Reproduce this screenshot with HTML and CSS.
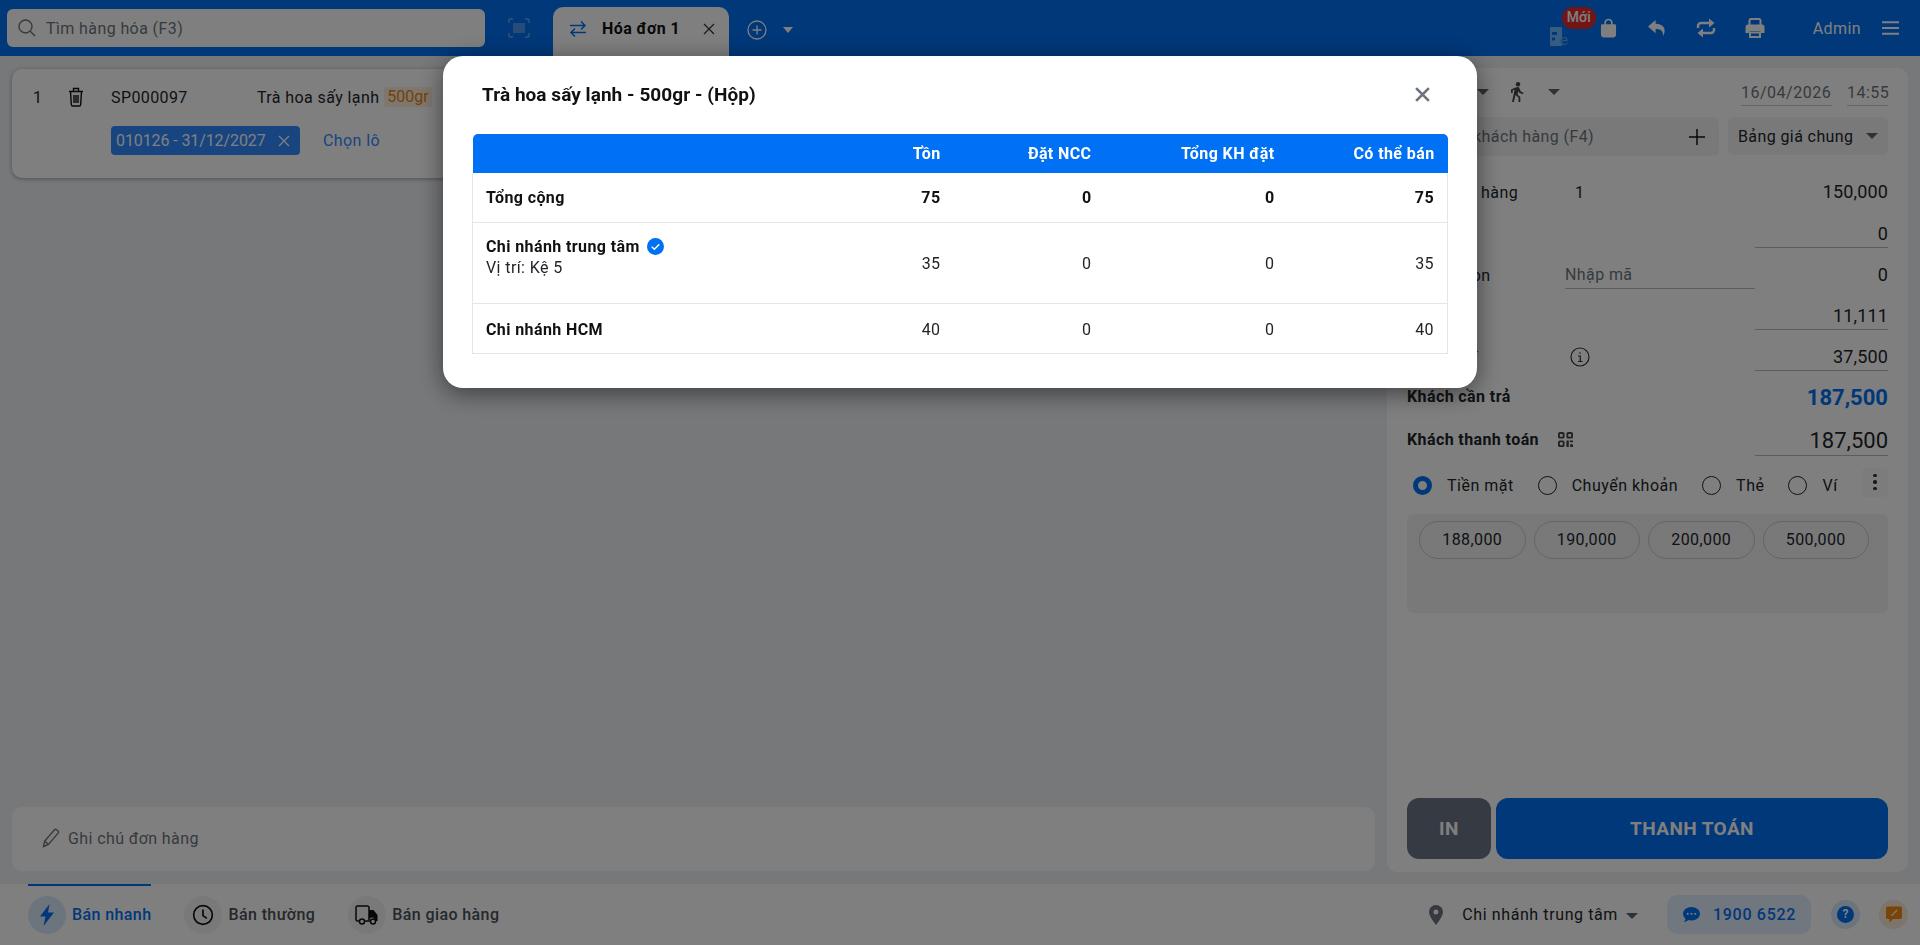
FILE: index.html
```html
<!DOCTYPE html>
<html>
<head>
    <title>Bán hàng</title>
    <link rel="stylesheet" href="styles.css">
</head>
<body>
    <div class="app">
        <header class="topbar">
            <div class="search">
                <svg class="search-icon" viewBox="0 0 20 20"><circle cx="8.5" cy="8.5" r="6.5"/><path d="M13.3 13.3 18 18"/></svg>
                <span>Tìm hàng hóa (F3)</span>
            </div>
            <svg class="barcode" viewBox="0 0 22 20"><path d="M1 5V2a1 1 0 0 1 1-1h3M17 1h3a1 1 0 0 1 1 1v3M21 15v3a1 1 0 0 1-1 1h-3M5 19H2a1 1 0 0 1-1-1v-3"/><path d="M6 5v10M8 5v10M10 5v10M12 5v10M14 5v10M16 5v10"/></svg>
            <div class="tab">
                <svg class="tab-swap" viewBox="0 0 18 18"><path d="M1 5.5h15M12 1.5l4 4-4 4M17 12.500H2M6 8.500l-4 4 4 4"/></svg>
                <span class="tab-name">Hóa đơn 1</span>
                <svg class="tab-close" viewBox="0 0 12 12"><path d="M1 1l10 10M11 1 1 11"/></svg>
            </div>
            <svg class="tab-add" viewBox="0 0 20 20"><circle cx="10" cy="10" r="9"/><path d="M10 5.5v9M5.5 10h9"/></svg>
            <span class="caret caret-light"></span>
            <div class="topbar-right">
                <div class="einvoice">
                    <svg viewBox="0 0 21 19"><path class="einvoice-doc" d="M0 1a1 1 0 0 1 1-1h10a1 1 0 0 1 1 1v17a1 1 0 0 1-1 1H1a1 1 0 0 1-1-1z"/><path class="einvoice-line" d="M2 5h5v3H2zM2 10.500h3v3H2z"/><text x="10" y="18" class="einvoice-e">e</text></svg>
                    <span class="badge-new">Mới</span>
                </div>
                <svg class="top-icon bag" viewBox="0 0 18 20"><path d="M1 7.5A1.500 1.500 0 0 1 2.500 6h13A1.500 1.500 0 0 1 17 7.500V17a3 3 0 0 1-3 3H4a3 3 0 0 1-3-3z" fill="#fff"/><path d="M5.500 7V4.500a3.500 3.500 0 0 1 7 0V7" fill="none" stroke="#fff" stroke-width="1.800"/></svg>
                <svg class="top-icon" viewBox="0 0 20 18"><path d="M8.600 1 1 7.600l7.600 6.600V10c5 0 7.400 1.500 7.600 7 3.200-5.600 1.600-12-7.600-12.200z" fill="#fff"/></svg>
                <svg class="top-icon" viewBox="0 0 20 20"><path d="M2 10V8a3 3 0 0 1 3-3h11M18 10v2a3 3 0 0 1-3 3H4" fill="none" stroke="#fff" stroke-width="2.400"/><path d="M13 .5 18.500 5 13 9.500zM7 10.500 1.500 15 7 19.500z" fill="#fff"/></svg>
                <svg class="top-icon" viewBox="0 0 20 20"><path d="M4.500 7V2.500A1.500 1.500 0 0 1 6 1h8a1.500 1.500 0 0 1 1.500 1.500V7" fill="none" stroke="#fff" stroke-width="2"/><path d="M3 6.500h14A2.500 2.500 0 0 1 19.500 9v6h-4v-2h-11v2h-4V9A2.500 2.500 0 0 1 3 6.500z" fill="#fff"/><path d="M5 14.500h10V19H5z" fill="none" stroke="#fff" stroke-width="2"/></svg>
                <span class="admin">Admin</span>
                <svg class="menu" viewBox="0 0 18 16"><path d="M0 2h18M0 8h18M0 14h18"/></svg>
            </div>
        </header>

        <main class="workspace">
            <section class="order">
                <div class="item-card">
                    <div class="item-row">
                        <span class="item-no">1</span>
                        <svg class="trash" viewBox="0 0 16 20"><path d="M1 4.500h14M5.500 4.500v-3h5v3M2.500 4.500l.8 13A1.500 1.500 0 0 0 4.800 19h6.400a1.500 1.500 0 0 0 1.500-1.500l.8-13M6 8v8M8 8v8M10 8v8"/></svg>
                        <span class="item-code">SP000097</span>
                        <span class="item-name">Trà hoa sấy lạnh</span>
                        <span class="item-unit">500gr</span>
                    </div>
                    <div class="lot-row">
                        <span class="lot-tag">010126 - 31/12/2027
                            <svg viewBox="0 0 12 12"><path d="M1 1l10 10M11 1 1 11"/></svg>
                        </span>
                        <span class="lot-pick">Chọn lô</span>
                    </div>
                </div>
                <div class="note">
                    <svg viewBox="0 0 18 20"><path d="M1.500 18.500l1.200-5.500L12.500 1.800a1.500 1.500 0 0 1 2.100-.1l1.400 1.300a1.500 1.500 0 0 1 .1 2.100L6.400 16.500zM2.700 13l3.700 3.500"/></svg>
                    <span>Ghi chú đơn hàng</span>
                </div>
            </section>

            <aside class="checkout">
                <div class="meta-row">
                    <span class="seller">Admin</span>
                    <span class="caret"></span>
                    <svg class="walk" viewBox="0 0 14 20"><circle cx="8" cy="2.300" r="2.200"/><path d="M5.500 5.500 8.800 5l2 4.500 2.700 1.200-.7 1.500-3.500-1.500-.8-1.700-1 3.500 2.800 2.500V20H8.500v-4.500L5.500 13 3.800 20H2l2-9.500.5-3-1.800.9V11H1V7.500z"/></svg>
                    <span class="caret"></span>
                    <span class="date">16/04/2026</span>
                    <span class="time">14:55</span>
                </div>
                <div class="customer-row">
                    <div class="customer">
                        <span>Tìm khách hàng (F4)</span>
                        <svg viewBox="0 0 16 16"><path d="M8 0v16M0 8h16"/></svg>
                    </div>
                    <div class="pricebook">
                        <span>Bảng giá chung</span>
                        <span class="caret"></span>
                    </div>
                </div>
                <div class="sum-row sum-first">
                    <span>Tổng tiền hàng</span>
                    <span class="sum-qty">1</span>
                    <span class="sum-value">150,000</span>
                </div>
                <div class="sum-row">
                    <span>Giảm giá</span>
                    <span></span>
                    <span class="sum-value line">0</span>
                </div>
                <div class="sum-row">
                    <span>Mã coupon</span>
                    <span class="coupon">Nhập mã</span>
                    <span class="sum-value">0</span>
                </div>
                <div class="sum-row">
                    <span>Thu khác</span>
                    <span></span>
                    <span class="sum-value line">11,111</span>
                </div>
                <div class="sum-row">
                    <span>Thuế VAT</span>
                    <svg class="info" viewBox="0 0 20 20"><circle cx="10" cy="10" r="9"/><path d="M8 9h2.300v5M8 14.500h4.500M10 5.300v1.500"/></svg>
                    <span class="sum-value line">37,500</span>
                </div>
                <div class="total-row">
                    <span class="total-label">Khách cần trả</span>
                    <span class="total-value">187,500</span>
                </div>
                <div class="paid-row">
                    <span class="paid-label">Khách thanh toán</span>
                    <svg class="qr" viewBox="0 0 16 16"><rect x="1" y="1" width="5" height="5" rx="1"/><rect x="10" y="1" width="5" height="5" rx="1"/><rect x="1" y="10" width="5" height="5" rx="1"/><path class="qr-fill" d="M9 9h2.500v7H9zM12.500 9H16v2h-3.500zM13 13h3v3h-3z"/></svg>
                    <span class="paid-value">187,500</span>
                </div>
                <div class="pay-methods">
                    <span class="radio radio-on"></span><span class="method">Tiền mặt</span>
                    <span class="radio"></span><span class="method">Chuyển khoản</span>
                    <span class="radio"></span><span class="method">Thẻ</span>
                    <span class="radio"></span><span class="method">Ví</span>
                    <span class="more"><i></i><i></i><i></i></span>
                </div>
                <div class="cash-box">
                    <span class="pill">188,000</span>
                    <span class="pill">190,000</span>
                    <span class="pill">200,000</span>
                    <span class="pill">500,000</span>
                </div>
                <div class="actions">
                    <button class="btn-print" type="button">IN</button>
                    <button class="btn-pay" type="button">THANH TOÁN</button>
                </div>
            </aside>
        </main>

        <footer class="bottombar">
            <div class="mode mode-active">
                <span class="mode-icon"><svg viewBox="0 0 16 22"><path class="bolt" d="M10.500 0 1 12.500h5.500L4.500 22 15 8.500H9z"/></svg></span>
                <span>Bán nhanh</span>
            </div>
            <div class="mode">
                <span class="mode-icon"><svg viewBox="0 0 20 20"><circle class="line-icon" cx="10" cy="10" r="8.500"/><path class="line-icon" d="M10 5v5.500l3.500 2.500"/></svg></span>
                <span>Bán thường</span>
            </div>
            <div class="mode">
                <span class="mode-icon"><svg viewBox="0 0 24 20"><path class="line-icon" d="M5 16H2.500A1.500 1.500 0 0 1 1 14.500v-12A1.500 1.500 0 0 1 2.500 1h10A1.500 1.500 0 0 1 14 2.500V15M9 16h6"/><path class="truck-fill" d="M14 5h4.500l4 5v6H20a3 3 0 0 0-6-1z"/><circle class="line-icon" cx="7" cy="16.500" r="2.500"/><circle class="line-icon" cx="18" cy="16.500" r="2.500"/></svg></span>
                <span>Bán giao hàng</span>
            </div>
            <div class="bottom-right">
                <svg class="pin" viewBox="0 0 14 20"><path fill-rule="evenodd" d="M7 0a7 7 0 0 1 7 7c0 4.500-7 13-7 13S0 11.500 0 7a7 7 0 0 1 7-7zm0 4.500a2.500 2.500 0 1 0 0 5 2.500 2.500 0 0 0 0-5z"/></svg>
                <span class="branch">Chi nhánh trung tâm</span>
                <span class="caret"></span>
                <div class="hotline">
                    <svg viewBox="0 0 18 16"><path fill-rule="evenodd" d="M9 0c5 0 9 3.200 9 7.200s-4 7.200-9 7.200c-1.200 0-2.300-.2-3.300-.5C4.500 15 2.500 16 .8 16c.9-1 1.700-2.300 1.800-3.500C1 11.200 0 9.300 0 7.200 0 3.200 4 0 9 0zM5 6a1.200 1.200 0 1 0 0 2.400A1.200 1.200 0 0 0 5 6zm4 0a1.200 1.200 0 1 0 0 2.400A1.200 1.200 0 0 0 9 6zm4 0a1.200 1.200 0 1 0 0 2.400A1.200 1.200 0 0 0 13 6z"/></svg>
                    <span>1900 6522</span>
                </div>
                <span class="help"><b>?</b></span>
                <span class="feedback">
                    <svg viewBox="0 0 18 18"><path fill-rule="evenodd" d="M2 0h14a2 2 0 0 1 2 2v10a2 2 0 0 1-2 2H8l-4 4v-4H2a2 2 0 0 1-2-2V2a2 2 0 0 1 2-2zm9.800 3.500L6 9.300 5.500 11l1.700-.5L13 4.700z"/></svg>
                </span>
            </div>
        </footer>
    </div>

    <div class="overlay">
        <div class="modal">
            <div class="modal-head">
                <h2>Trà hoa sấy lạnh - 500gr - (Hộp)</h2>
                <svg class="modal-close" viewBox="0 0 16 16"><path d="M2 2l12 12M14 2 2 14"/></svg>
            </div>
            <table class="stock">
                <thead>
                    <tr>
                        <th class="col-name"></th>
                        <th class="col-a">Tồn</th>
                        <th class="col-b">Đặt NCC</th>
                        <th class="col-c">Tổng KH đặt</th>
                        <th class="col-d">Có thể bán</th>
                    </tr>
                </thead>
                <tbody>
                    <tr class="row-total">
                        <td>Tổng cộng</td><td>75</td><td>0</td><td>0</td><td>75</td>
                    </tr>
                    <tr class="row-branch">
                        <td>
                            <div class="branch-name">Chi nhánh trung tâm
                                <svg viewBox="0 0 18 18"><circle cx="9" cy="9" r="9"/><path d="M5 9.200l2.800 2.800L13 6.500"/></svg>
                            </div>
                            <div class="branch-pos">Vị trí: Kệ 5</div>
                        </td>
                        <td>35</td><td>0</td><td>0</td><td>35</td>
                    </tr>
                    <tr class="row-plain">
                        <td><div class="branch-name">Chi nhánh HCM</div></td>
                        <td>40</td><td>0</td><td>0</td><td>40</td>
                    </tr>
                </tbody>
            </table>
        </div>
    </div>
</body>
</html>
```

FILE: styles.css
```css
* {
    box-sizing: border-box;
}
html, body {
    margin: 0;
    height: 100%;
    overflow: hidden;
}
body {
    font-family: Roboto, "Liberation Sans", sans-serif;
    font-size: 16px;
    letter-spacing: .4px;
    color: #212529;
    background: #ecf0f4;
}
svg {
    display: block;
    flex: none;
}
.app {
    height: 945px;
    display: flex;
    flex-direction: column;
}
.caret {
    display: block;
    flex: none;
    width: 0;
    height: 0;
    border-left: 6px solid transparent;
    border-right: 6px solid transparent;
    border-top: 6px solid #5b6470;
}
.caret-light {
    border-left-width: 5px;
    border-right-width: 5px;
    border-top-color: #fff;
    margin-left: 16px;
}

/* top bar */
.topbar {
    height: 56px;
    flex: none;
    background: #0070f4;
    display: flex;
    align-items: flex-end;
    padding-left: 7px;
}
.search {
    width: 478px;
    height: 38px;
    margin-bottom: 9px;
    background: #fff;
    border-radius: 6px;
    display: flex;
    align-items: center;
    gap: 9px;
    padding-left: 10px;
    color: #6c757d;
}
.search-icon {
    width: 20px;
    height: 20px;
    fill: none;
    stroke: #6c757d;
    stroke-width: 1.4;
}
.barcode {
    width: 22px;
    height: 20px;
    margin: 0 23px 18px 23px;
    fill: none;
    stroke: #6ea9f0;
    stroke-width: 1.4;
}
.tab {
    width: 176px;
    height: 49px;
    background: #fff;
    border-radius: 10px 10px 0 0;
    display: flex;
    align-items: center;
    padding: 0 14px 6px 16px;
}
.tab-swap {
    width: 18px;
    height: 18px;
    fill: none;
    stroke: #0070f4;
    stroke-width: 1.5;
}
.tab-name {
    margin-left: 15px;
    font-weight: 700;
    color: #111;
}
.tab-close {
    width: 12px;
    height: 12px;
    margin-left: auto;
    fill: none;
    stroke: #333;
    stroke-width: 1.2;
}
.tab-add {
    width: 20px;
    height: 20px;
    margin: 0 0 16px 18px;
    fill: none;
    stroke: #fff;
    stroke-width: 1.3;
}
.topbar > .caret-light {
    margin-bottom: 23px;
}
.topbar-right {
    margin-left: auto;
    align-self: stretch;
    display: flex;
    align-items: center;
    padding-right: 21px;
    color: #fff;
}
.einvoice {
    width: 44px;
    height: 40px;
    position: relative;
    margin-right: 6px;
    padding-top: 19px;
}
.einvoice svg {
    width: 21px;
    height: 19px;
    overflow: visible;
}
.einvoice-doc {
    fill: #70b8ff;
}
.einvoice-line {
    fill: #0070f4;
}
.einvoice-e {
    font-family: Roboto, sans-serif;
    font-size: 15px;
    letter-spacing: 0;
    fill: #70b8ff;
    stroke: #0070f4;
    stroke-width: .3;
}
.badge-new {
    position: absolute;
    left: 12px;
    top: -1px;
    width: 34px;
    height: 22px;
    border-radius: 11px;
    background: #e62a2a;
    color: #fff;
    font-size: 14px;
    letter-spacing: 0;
    font-weight: 500;
    text-align: center;
    line-height: 21px;
}
.top-icon {
    width: 20px;
    height: 20px;
    margin-right: 29px;
}
.bag {
    width: 17px;
    margin-right: 30px;
}
.admin {
    margin-left: 19px;
}
.menu {
    width: 17px;
    height: 16px;
    margin-left: 21px;
    stroke: #fff;
    stroke-width: 2.2;
}

/* main area */
.workspace {
    flex: 1;
    min-height: 0;
    display: flex;
    gap: 12px;
    padding: 12px;
}
.order {
    flex: 1;
    display: flex;
    flex-direction: column;
    justify-content: space-between;
    padding: 1px 0;
}
.item-card {
    height: 109px;
    background: #fff;
    border-radius: 10px;
    box-shadow: 0 1px 4px rgba(0, 0, 0, .35);
    padding: 0 21px;
}
.item-row {
    height: 56px;
    display: flex;
    align-items: center;
}
.item-no {
    width: 35px;
}
.trash {
    width: 16px;
    height: 20px;
    fill: none;
    stroke: #111;
    stroke-width: 1.4;
}
.item-code {
    margin-left: 27px;
    width: 146px;
}
.item-name {
    width: 127px;
    letter-spacing: .4px;
    white-space: nowrap;
}
.item-unit {
    width: 48px;
    height: 20px;
    line-height: 20px;
    text-align: center;
    border-radius: 3px;
    background: #ffefdc;
    color: #e8820c;
    letter-spacing: 0;
}
.lot-row {
    display: flex;
    align-items: center;
    margin: 1px 0 0 78px;
}
.lot-tag {
    width: 189px;
    height: 29px;
    border-radius: 4px;
    background: #3088ff;
    color: #fff;
    display: flex;
    align-items: center;
    justify-content: space-between;
    padding: 0 10px 0 5px;
    letter-spacing: -.1px;
}
.lot-tag svg {
    width: 12px;
    height: 12px;
    stroke: #fff;
    stroke-width: 1.3;
}
.lot-pick {
    margin-left: 23px;
    color: #3088ff;
}
.note {
    height: 64px;
    background: #fff;
    border-radius: 10px;
    display: flex;
    align-items: center;
    padding: 0 0 2px 30px;
    gap: 8px;
    color: #6c757d;
}
.note svg {
    width: 18px;
    height: 20px;
    fill: none;
    stroke: #6c757d;
    stroke-width: 1.4;
}

/* right panel */
.checkout {
    width: 521px;
    flex: none;
    background: #fff;
    border-radius: 10px;
    padding: 0 20px;
    display: flex;
    flex-direction: column;
}
.meta-row {
    height: 38px;
    display: flex;
    align-items: center;
    padding-top: 10px;
}
.seller {
    width: 70px;
}
.walk {
    width: 14px;
    height: 20px;
    margin-left: 21px;
    fill: #444;
}
.meta-row .walk + .caret {
    margin-left: 24px;
}
.date, .time {
    height: 28px;
    line-height: 29px;
    color: #6c757d;
    border-bottom: 1px solid #c5c9cf;
    white-space: nowrap;
}
.date {
    margin-left: auto;
    width: 91px;
    letter-spacing: .5px;
}
.time {
    width: 41px;
    margin-left: 15px;
    letter-spacing: .5px;
}
.customer-row {
    display: flex;
    gap: 9px;
    margin-top: 11px;
}
.customer {
    flex: 1;
    height: 39px;
    background: #f2f3f5;
    border-radius: 6px;
    display: flex;
    align-items: center;
    justify-content: space-between;
    padding: 0 14px 0 33px;
    color: #6c757d;
}
.customer svg {
    width: 16px;
    height: 16px;
    stroke: #111;
    stroke-width: 1.5;
}
.pricebook {
    width: 160px;
    height: 38px;
    background: #f2f3f5;
    border-radius: 6px;
    display: flex;
    align-items: center;
    justify-content: space-between;
    padding: 0 10px;
}
.sum-row {
    display: grid;
    grid-template-columns: 158px 190px 133px;
    align-items: end;
    height: 41px;
}
.sum-first {
    margin-top: 10px;
}
.sum-row > span:first-child {
    padding-bottom: 4px;
    white-space: nowrap;
}
.sum-first > span:first-child {
    padding-bottom: 5px;
}
.sum-qty {
    padding: 0 0 5px 10px;
}
.sum-first .sum-value {
    margin-bottom: 1px;
}
.sum-value {
    height: 27px;
    line-height: 26px;
    text-align: right;
    font-size: 18px;
    letter-spacing: .15px;
}
.line {
    border-bottom: 1px solid #b5b9bf;
}
.coupon {
    height: 27px;
    line-height: 26px;
    color: #6c757d;
    border-bottom: 1px solid #b5b9bf;
}
.info {
    width: 20px;
    height: 20px;
    margin: 0 0 4px 5px;
    fill: none;
    stroke: #333;
    stroke-width: 1.2;
}
.total-row {
    display: flex;
    justify-content: space-between;
    align-items: center;
    height: 41px;
    margin-top: 6px;
    font-weight: 700;
}
.total-label {
    padding-bottom: 3px;
}
.total-value {
    font-size: 22px;
    letter-spacing: 0;
    color: #0070f4;
}
.paid-row {
    display: flex;
    align-items: center;
    height: 33px;
    margin-top: 5px;
    font-weight: 700;
}
.qr {
    width: 15px;
    height: 15px;
    margin-left: 19px;
    fill: none;
    stroke: #444;
    stroke-width: 2;
}
.qr-fill {
    stroke: none;
    fill: #444;
}
.paid-value {
    margin-left: auto;
    width: 133px;
    height: 33px;
    line-height: 35px;
    text-align: right;
    font-size: 22px;
    letter-spacing: 0;
    font-weight: 400;
    border-bottom: 1px solid #b5b9bf;
}
.pay-methods {
    display: flex;
    align-items: center;
    height: 58px;
    padding-left: 6px;
}
.radio {
    width: 19px;
    height: 19px;
    flex: none;
    border-radius: 50%;
    border: 1.5px solid #212529;
    margin-right: 15px;
    background: #fff;
}
.radio-on {
    border: 5.5px solid #0070f4;
}
.method {
    margin-right: 24px;
    white-space: nowrap;
    letter-spacing: .5px;
}
.more {
    margin-left: auto;
    width: 28px;
    height: 29px;
    border-radius: 4px;
    background: #f8f8f9;
    display: flex;
    flex-direction: column;
    align-items: center;
    justify-content: center;
    gap: 3px;
    margin-top: -6px;
}
.more i {
    width: 3.5px;
    height: 3.5px;
    border-radius: 50%;
    background: #333;
}
.cash-box {
    height: 99px;
    background: #f2f3f5;
    border-radius: 6px;
    padding: 7px 12px;
    display: flex;
    align-items: flex-start;
    gap: 8px;
}
.pill {
    width: 106.5px;
    height: 38px;
    line-height: 36px;
    text-align: center;
    border: 1px solid #c5c9cf;
    border-radius: 19px;
}
.actions {
    margin-top: auto;
    margin-bottom: 13px;
    display: flex;
    gap: 5px;
}
.actions button {
    height: 61px;
    border: none;
    border-radius: 12px;
    font-family: inherit;
    font-size: 19px;
    letter-spacing: .4px;
    font-weight: 700;
    color: #fff;
}
.btn-print {
    width: 84px;
    background: #6c7786;
}
.btn-pay {
    flex: 1;
    background: #0070f4;
}

/* bottom bar */
.bottombar {
    height: 61px;
    flex: none;
    background: #fff;
    display: flex;
    align-items: center;
    padding: 0 12px 0 28px;
    font-weight: 500;
    color: #4a5159;
}
.mode {
    height: 100%;
    display: flex;
    align-items: center;
    gap: 6px;
    margin-right: 33px;
}
.mode-active {
    color: #0070f4;
    border-top: 2px solid #0070f4;
    padding-bottom: 2px;
}
.mode-icon {
    width: 38px;
    height: 38px;
    border-radius: 50%;
    background: #f2f3f5;
    display: flex;
    align-items: center;
    justify-content: center;
}
.mode-active .mode-icon {
    background: #d9e8fb;
}
.mode-icon svg {
    width: 24px;
    height: 22px;
}
.bolt {
    fill: #0070f4;
}
.line-icon {
    fill: none;
    stroke: #111;
    stroke-width: 1.5;
}
.truck-fill {
    fill: #111;
}
.bottom-right {
    margin-left: auto;
    display: flex;
    align-items: center;
    font-weight: 400;
    color: #212529;
}
.pin {
    width: 14px;
    height: 20px;
    fill: #6c757d;
}
.branch {
    margin-left: 19px;
    letter-spacing: .6px;
}
.bottom-right > .caret {
    margin: 2px 0 0 8px;
}
.hotline {
    width: 144px;
    height: 39px;
    margin-left: 29px;
    border-radius: 10px;
    background: #e3eefc;
    color: #0070f4;
    font-weight: 500;
    letter-spacing: .7px;
    display: flex;
    align-items: center;
    padding-left: 16px;
    gap: 13px;
}
.hotline svg {
    width: 17px;
    height: 15px;
    fill: #0070f4;
}
.help, .feedback {
    width: 29px;
    height: 29px;
    border-radius: 50%;
    display: flex;
    align-items: center;
    justify-content: center;
    margin-left: 20px;
}
.feedback {
    margin-left: 19px;
    background: #fbe9d6;
}
.help {
    background: #d9e8fb;
}
.help b {
    width: 17px;
    height: 17px;
    border-radius: 50%;
    background: #0070f4;
    color: #fff;
    font-size: 12px;
    letter-spacing: 0;
    line-height: 17px;
    text-align: center;
}
.feedback svg {
    width: 16px;
    height: 17px;
    fill: #f08a0c;
}

/* stock popup */
.overlay {
    position: fixed;
    inset: 0;
    background: rgba(0, 0, 0, .5);
    display: flex;
    justify-content: center;
    align-items: flex-start;
    padding-top: 56px;
}
.modal {
    width: 1034px;
    height: 332px;
    background: #fff;
    border-radius: 20px;
    box-shadow: 0 5px 25px rgba(0, 0, 0, .5);
    padding: 0 29px;
}
.modal-head {
    height: 76px;
    margin-bottom: 2px;
    display: flex;
    align-items: center;
    justify-content: space-between;
    padding: 0 17px 0 10px;
}
.modal-head h2 {
    margin: 0;
    font-size: 19px;
    font-weight: 700;
    letter-spacing: .05px;
    color: #111;
}
.modal-close {
    width: 17px;
    height: 17px;
    stroke: #6c757d;
    stroke-width: 2.5;
}
.stock {
    width: 975px;
    border-collapse: collapse;
    table-layout: fixed;
    color: #212529;
}
.stock th {
    height: 39px;
    background: #0070f4;
    color: #fff;
    text-align: right;
    padding: 0 13px;
    font-weight: 700;
}
.stock th:first-child {
    border-radius: 5px 0 0 0;
}
.stock th:last-child {
    border-radius: 0 5px 0 0;
}
.col-name {
    width: 345px;
}
.col-a {
    width: 136px;
}
.col-b {
    width: 151px;
}
.col-c {
    width: 183px;
}
.col-d {
    width: 160px;
}
.stock td {
    text-align: right;
    padding: 0 13px;
    border-bottom: 1px solid #e3e5e8;
}
.stock td:first-child {
    text-align: left;
    border-left: 1px solid #e3e5e8;
}
.stock td:last-child {
    border-right: 1px solid #e3e5e8;
}
.row-total td {
    height: 49px;
    font-weight: 700;
    color: #111;
}
.row-branch td {
    height: 81px;
    padding-top: 2px;
}
.row-branch td:first-child {
    vertical-align: top;
    padding-top: 14px;
}
.row-plain td {
    height: 50px;
    padding-top: 2px;
}
.branch-name {
    display: flex;
    align-items: center;
    gap: 7px;
    font-weight: 700;
    color: #111;
    height: 20px;
}
.branch-name svg {
    width: 17px;
    height: 17px;
    fill: #0070f4;
}
.branch-name svg path {
    fill: none;
    stroke: #fff;
    stroke-width: 1.5;
}
.branch-pos {
    margin-top: 1px;
}
```
